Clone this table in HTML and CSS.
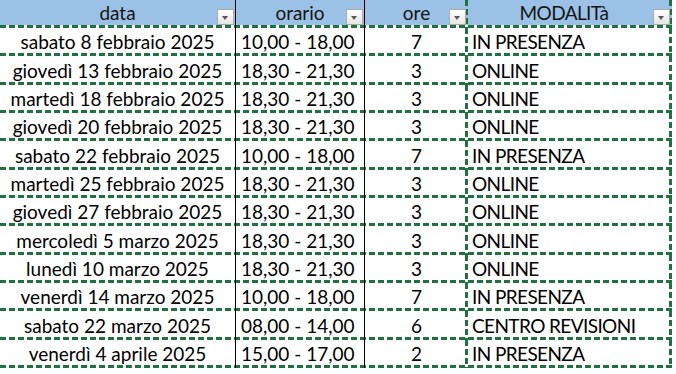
FILE: index.html
```html
<!DOCTYPE html>
<html lang="it">
<head>
<meta charset="utf-8">
<title>Calendario</title>
<link rel="stylesheet" href="styles.css">
</head>
<body>
<div class="sheet">
  <div class="row head">
    <div class="cell ca">data<span class="flt"></span></div>
    <div class="cell cb hb">orario<span class="flt"></span></div>
    <div class="cell cc">ore<span class="flt"></span></div>
    <div class="cell cd hd">MODALITà<span class="flt"></span></div>
  </div>
  <div class="row"><div class="cell ca">sabato 8 febbraio 2025</div><div class="cell cb">10,00 - 18,00</div><div class="cell cc">7</div><div class="cell cd">IN PRESENZA</div></div>
  <div class="row"><div class="cell ca">giovedì 13 febbraio 2025</div><div class="cell cb">18,30 - 21,30</div><div class="cell cc">3</div><div class="cell cd">ONLINE</div></div>
  <div class="row"><div class="cell ca">martedì 18 febbraio 2025</div><div class="cell cb">18,30 - 21,30</div><div class="cell cc">3</div><div class="cell cd">ONLINE</div></div>
  <div class="row"><div class="cell ca">giovedì 20 febbraio 2025</div><div class="cell cb">18,30 - 21,30</div><div class="cell cc">3</div><div class="cell cd">ONLINE</div></div>
  <div class="row"><div class="cell ca">sabato 22 febbraio 2025</div><div class="cell cb">10,00 - 18,00</div><div class="cell cc">7</div><div class="cell cd">IN PRESENZA</div></div>
  <div class="row"><div class="cell ca">martedì 25 febbraio 2025</div><div class="cell cb">18,30 - 21,30</div><div class="cell cc">3</div><div class="cell cd">ONLINE</div></div>
  <div class="row"><div class="cell ca">giovedì 27 febbraio 2025</div><div class="cell cb">18,30 - 21,30</div><div class="cell cc">3</div><div class="cell cd">ONLINE</div></div>
  <div class="row"><div class="cell ca">mercoledì 5 marzo 2025</div><div class="cell cb">18,30 - 21,30</div><div class="cell cc">3</div><div class="cell cd">ONLINE</div></div>
  <div class="row"><div class="cell ca">lunedì 10 marzo 2025</div><div class="cell cb">18,30 - 21,30</div><div class="cell cc">3</div><div class="cell cd">ONLINE</div></div>
  <div class="row"><div class="cell ca">venerdì 14 marzo 2025</div><div class="cell cb">10,00 - 18,00</div><div class="cell cc">7</div><div class="cell cd">IN PRESENZA</div></div>
  <div class="row"><div class="cell ca">sabato 22 marzo 2025</div><div class="cell cb">08,00 - 14,00</div><div class="cell cc">6</div><div class="cell cd">CENTRO REVISIONI</div></div>
  <div class="row"><div class="cell ca">venerdì 4 aprile 2025</div><div class="cell cb">15,00 - 17,00</div><div class="cell cc">2</div><div class="cell cd">IN PRESENZA</div></div>
</div>
</body>
</html>
```

FILE: styles.css
```css
html, body {
  margin: 0;
  padding: 0;
  background: #ffffff;
}

body {
  font-family: Lato, "Liberation Sans", sans-serif;
}

.sheet {
  width: 672px;
}

.row {
  display: grid;
  grid-template-columns: 236px 129px 103px 204px;
  height: 28px;
  background:
    repeating-linear-gradient(90deg, #1f7240 0 6px, transparent 6px 9px) left bottom / 100% 3px no-repeat;
}

.row:nth-child(3n+3) {
  height: 29px;
}

.head {
  background:
    repeating-linear-gradient(90deg, #1f7240 0 6px, transparent 6px 9px) left bottom / 100% 3px no-repeat,
    linear-gradient(#9bc2e6, #9bc2e6) left top / 100% 25px no-repeat;
}

.cell {
  position: relative;
  display: flex;
  align-items: flex-end;
  box-sizing: border-box;
  padding-bottom: 3px;
  font-size: 19px;
  line-height: 22px;
  color: #000;
  white-space: nowrap;
}

.ca {
  justify-content: center;
  border-right: 1px solid #000;
}

.cb {
  padding-left: 5px;
  border-right: 1px solid #000;
}

.cc {
  justify-content: center;
}

.cd {
  padding-left: 4px;
  letter-spacing: -0.6px;
}

.cc, .cd {
  background:
    repeating-linear-gradient(180deg, #1f7240 0 6px, transparent 6px 9px) right top / 3px 100% no-repeat;
}

.head .cell {
  color: #141414;
  padding-bottom: 4px;
}

.hb {
  justify-content: center;
  padding-left: 0;
}

.hd {
  justify-content: center;
  padding-left: 0;
  padding-right: 12px;
}

.flt {
  position: absolute;
  top: 9px;
  right: 1px;
  width: 17px;
  height: 16px;
  box-sizing: border-box;
  border: 1px solid #ababab;
  background: linear-gradient(#ffffff, #e6e6e6);
}

.cc .flt, .cd .flt {
  right: 2px;
}

.flt::after {
  content: "";
  position: absolute;
  left: 4px;
  top: 6px;
  border-left: 3.5px solid transparent;
  border-right: 3.5px solid transparent;
  border-top: 4px solid #595959;
}
```
